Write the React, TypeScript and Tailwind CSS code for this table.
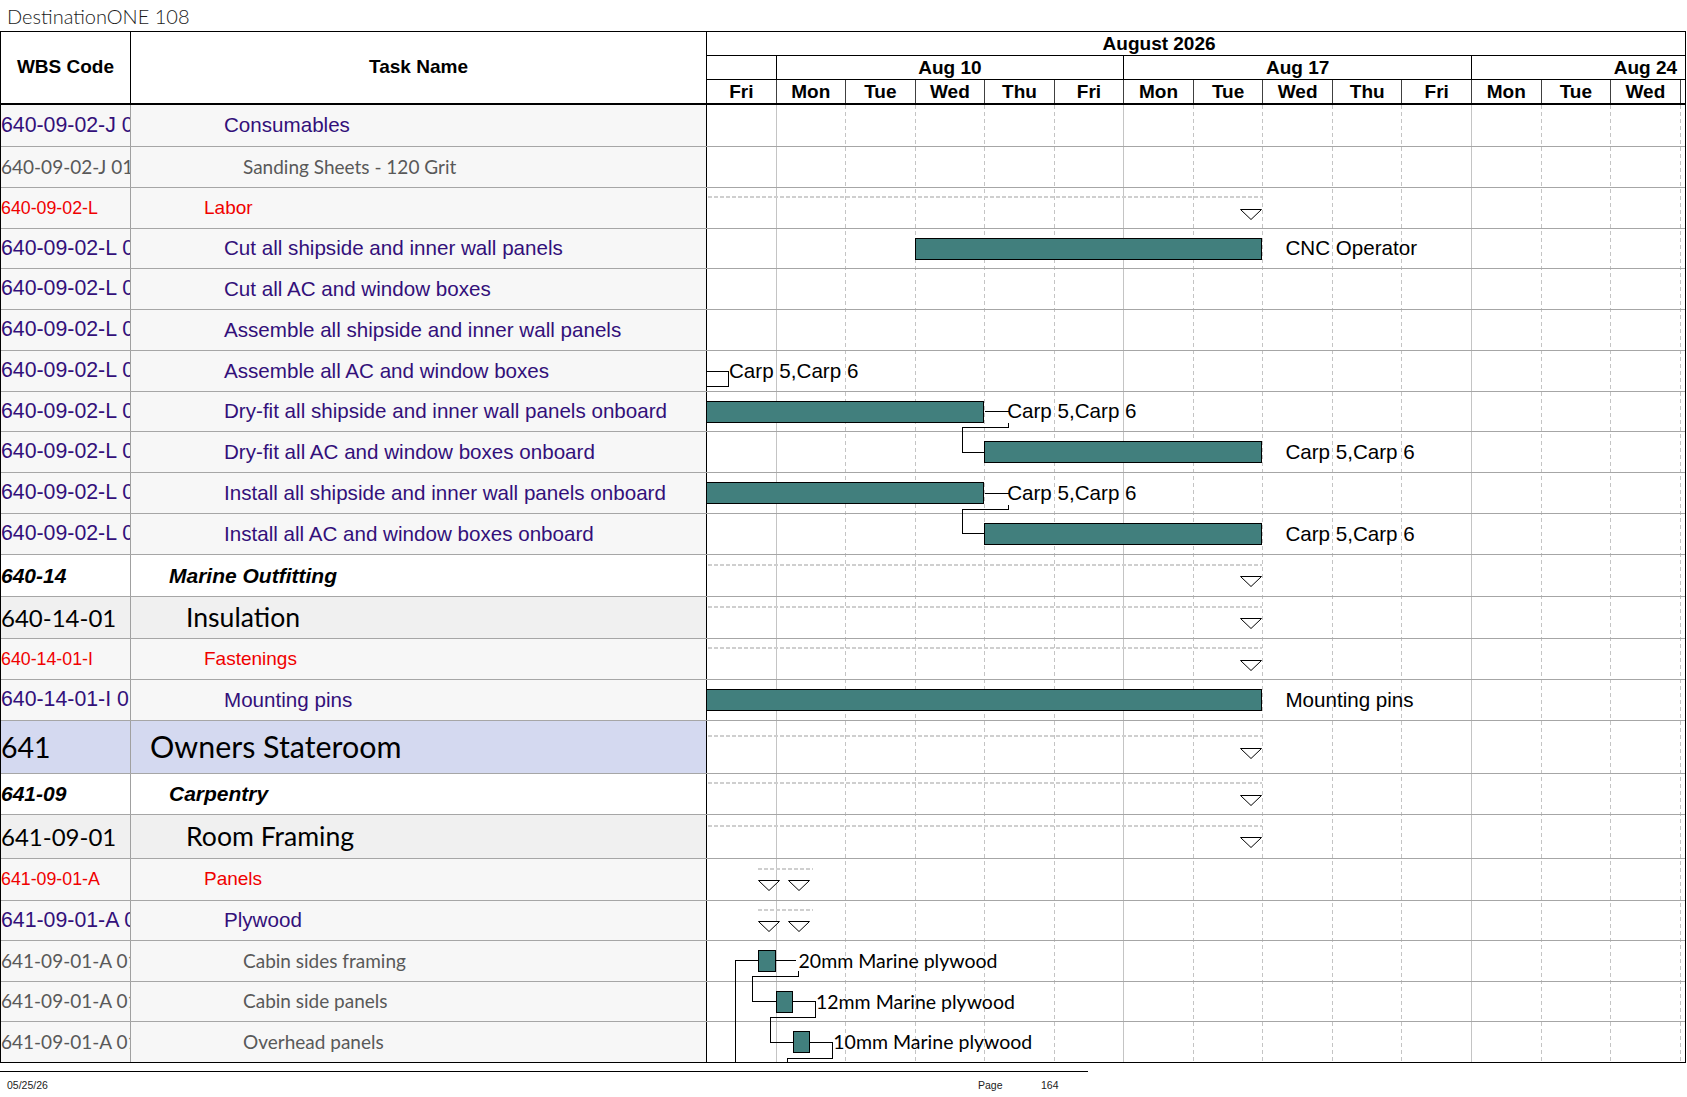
import React from "react";

const D = 69.55;

type Kind = "p" | "g" | "r" | "b" | "l3" | "l1";

type Row = {
  wbs: string;
  name: string;
  kind: Kind;
  h: number;
  bar?: [number, number];
  sum?: [number, number];
  twin?: boolean;
  label?: string;
  labelAt?: number;
  lato?: boolean;
};

const kindStyle: Record<Kind, { bg: string; text: string; wt: string; pl: string }> = {
  p: { bg: "bg-[#f7f7f7]", text: "text-[20.6px] text-[#33107a]", wt: "text-[21.3px] text-[#33107a]", pl: "pl-[93px]" },
  g: {
    bg: "bg-[#f7f7f7]",
    text: "font-['Lato',sans-serif] text-[19px] text-[#595959]",
    wt: "font-['Lato',sans-serif] text-[19px] text-[#595959]",
    pl: "pl-[112px]",
  },
  r: { bg: "bg-[#f7f7f7]", text: "text-[19px] text-[#f00000]", wt: "text-[17.8px] text-[#f00000]", pl: "pl-[73px]" },
  b: { bg: "bg-white", text: "text-[21px] font-bold italic text-black", wt: "text-[21px] font-bold italic text-black", pl: "pl-[38px]" },
  l3: {
    bg: "bg-[#f0f0f0]",
    text: "font-['Lato',sans-serif] text-[26.6px] text-black",
    wt: "font-['Lato',sans-serif] text-[24px] text-black",
    pl: "pl-[55px]",
  },
  l1: {
    bg: "bg-[#d4d9f0]",
    text: "font-['Lato',sans-serif] text-[30.4px] text-black",
    wt: "font-['Lato',sans-serif] text-[28.5px] text-black",
    pl: "pl-[19px]",
  },
};

const rows: Row[] = [
  { wbs: "640-09-02-J 01", name: "Consumables", kind: "p", h: 42 },
  { wbs: "640-09-02-J 0101", name: "Sanding Sheets - 120 Grit", kind: "g", h: 41 },
  { wbs: "640-09-02-L", name: "Labor", kind: "r", h: 41, sum: [-1, 8] },
  { wbs: "640-09-02-L 01", name: "Cut all shipside and inner wall panels", kind: "p", h: 40, bar: [3, 8], label: "CNC Operator" },
  { wbs: "640-09-02-L 02", name: "Cut all AC and window boxes", kind: "p", h: 41 },
  { wbs: "640-09-02-L 03", name: "Assemble all shipside and inner wall panels", kind: "p", h: 41 },
  { wbs: "640-09-02-L 04", name: "Assemble all AC and window boxes", kind: "p", h: 41, label: "Carp 5,Carp 6", labelAt: 0 },
  { wbs: "640-09-02-L 05", name: "Dry-fit all shipside and inner wall panels onboard", kind: "p", h: 40, bar: [-1, 4], label: "Carp 5,Carp 6" },
  { wbs: "640-09-02-L 06", name: "Dry-fit all AC and window boxes onboard", kind: "p", h: 41, bar: [4, 8], label: "Carp 5,Carp 6" },
  { wbs: "640-09-02-L 07", name: "Install all shipside and inner wall panels onboard", kind: "p", h: 41, bar: [-1, 4], label: "Carp 5,Carp 6" },
  { wbs: "640-09-02-L 08", name: "Install all AC and window boxes onboard", kind: "p", h: 41, bar: [4, 8], label: "Carp 5,Carp 6" },
  { wbs: "640-14", name: "Marine Outfitting", kind: "b", h: 42, sum: [-1, 8] },
  { wbs: "640-14-01", name: "Insulation", kind: "l3", h: 42, sum: [-1, 8] },
  { wbs: "640-14-01-I", name: "Fastenings", kind: "r", h: 41, sum: [-1, 8] },
  { wbs: "640-14-01-I 01", name: "Mounting pins", kind: "p", h: 41, bar: [-1, 8], label: "Mounting pins" },
  { wbs: "641", name: "Owners Stateroom", kind: "l1", h: 53, sum: [-1, 8] },
  { wbs: "641-09", name: "Carpentry", kind: "b", h: 41, sum: [-1, 8] },
  { wbs: "641-09-01", name: "Room Framing", kind: "l3", h: 44, sum: [-1, 8] },
  { wbs: "641-09-01-A", name: "Panels", kind: "r", h: 42, sum: [0.75, 1.5], twin: true },
  { wbs: "641-09-01-A 01", name: "Plywood", kind: "p", h: 40, sum: [0.75, 1.5], twin: true },
  { wbs: "641-09-01-A 0101", name: "Cabin sides framing", kind: "g", h: 41, bar: [0.75, 1.0], label: "20mm Marine plywood", lato: true },
  { wbs: "641-09-01-A 0102", name: "Cabin side panels", kind: "g", h: 40, bar: [1.0, 1.25], label: "12mm Marine plywood", lato: true },
  { wbs: "641-09-01-A 0103", name: "Overhead panels", kind: "g", h: 40, bar: [1.25, 1.5], label: "10mm Marine plywood", lato: true },
];

// the last column (Thu) only shows as a sliver at the right edge, so no label
const days = ["Fri", "Mon", "Tue", "Wed", "Thu", "Fri", "Mon", "Tue", "Wed", "Thu", "Fri", "Mon", "Tue", "Wed", ""];
// first week starts 4 days before the visible range; its label would be off-screen
const weeks = ["", "Aug 10", "Aug 17", "Aug 24"];

function Tri({ left, top }: { left: number; top: number }) {
  return (
    <svg className="absolute" style={{ left, top }} width="22" height="11" viewBox="0 0 22 11">
      <polygon points="0.5,0.5 21.5,0.5 11,10.5" fill="white" stroke="black" strokeWidth="1" />
    </svg>
  );
}

function GanttCell({ row }: { row: Row }) {
  const c = (row.h - 1) / 2;
  const end = row.bar ? row.bar[1] : row.labelAt ?? 0;
  return (
    <div className="relative flex-1 self-stretch overflow-hidden">
      {row.sum && (
        <>
          <div
            className="absolute h-[2px] bg-[repeating-linear-gradient(90deg,#cfcfcf_0_4px,transparent_4px_6px)]"
            style={{ left: row.sum[0] * D - 1, width: (row.sum[1] - row.sum[0]) * D + (row.twin ? 3 : 0), top: Math.round(c - 12) }}
          />
          {row.twin && <Tri left={row.sum[0] * D - 1} top={Math.round(c + 0.5)} />}
          <Tri left={row.sum[1] * D - 23} top={Math.round(c + 0.5)} />
        </>
      )}
      {row.bar && (
        <div
          className="absolute h-[22px] border border-black bg-[#417f7d]"
          style={{ left: row.bar[0] * D - 1, width: (row.bar[1] - row.bar[0]) * D, top: Math.round(c - 11) }}
        />
      )}
      {row.label && (
        <div
          className={
            "absolute inset-y-0 flex items-center whitespace-nowrap text-black " +
            (row.lato ? "font-['Lato',sans-serif] text-[19.5px]" : "text-[20.6px]")
          }
          style={{ left: end * D + 22 }}
        >
          {row.label}
        </div>
      )}
    </div>
  );
}

function Links() {
  const paths = [
    "M706 371.5 H728.5 V386.5 H706",
    "M984.5 411.5 H1008.5",
    "M1008.5 422.5 V427.5 H962.5 V452.5 H985",
    "M984.5 493.5 H1008.5",
    "M1008.5 504.5 V509.5 H962.5 V533.5 H985",
    "M735.5 1062 V960.5 H758.5",
    "M775 960.5 H796",
    "M798.5 971 V976.5 H752.5 V1001.5 H775.5",
    "M792.5 1001.5 H815.5 V1017.5 H770.5 V1042.5 H793.5",
    "M810 1042.5 H832.5 V1058.5 H787.5 V1062",
  ];
  return (
    <svg
      className="absolute left-[705px] top-0 z-20 pointer-events-none"
      width="979"
      height="957"
      viewBox="706 105 979 957"
    >
      {paths.map((d, i) => (
        <path key={i} d={d} fill="none" stroke="black" strokeWidth="1" shapeRendering="crispEdges" />
      ))}
    </svg>
  );
}

export default function App() {
  return (
    <div className="relative w-[1687px] h-[1097px] overflow-hidden bg-white font-['Liberation_Sans',Arial,sans-serif] text-black">
      {/* Title */}
      <div className="h-[31px] flex items-center pl-[7px] font-['Lato',sans-serif] font-light text-[20px] text-[#1a1a1a]">
        DestinationONE 108
      </div>

      {/* Table */}
      <div className="w-[1686px] border border-black">
        {/* Header */}
        <div className="flex h-[73px] border-b-2 border-black">
          <div className="w-[130px] shrink-0 border-r border-black flex items-center justify-center text-[19px] font-bold">
            WBS Code
          </div>
          <div className="w-[576px] shrink-0 border-r border-black flex items-center justify-center text-[19px] font-bold">
            Task Name
          </div>
          <div className="flex-1 flex flex-col overflow-hidden text-[19px] font-bold">
            <div className="h-[24px] shrink-0 border-b border-black flex">
              <div className="-ml-[278.2px] w-[1460.55px] shrink-0 text-center leading-[23px]">August 2026</div>
            </div>
            <div className="h-[24px] shrink-0 border-b border-black flex">
              <div className="-ml-[278.2px] flex">
                {weeks.map((w, i) => (
                  <div key={i} className="w-[347.75px] shrink-0 border-r border-black text-center leading-[23px]">
                    {w}
                  </div>
                ))}
              </div>
            </div>
            <div className="h-[23px] shrink-0 flex">
              {days.map((d, i) => (
                <div key={i} className="w-[69.55px] shrink-0 border-r border-[#404040] text-center leading-[23px]">
                  {d}
                </div>
              ))}
            </div>
          </div>
        </div>

        {/* Body */}
        <div className="relative">
          {/* day grid */}
          <div className="absolute left-[706px] top-0 bottom-0 right-0 z-0 flex overflow-hidden">
            {days.map((_, i) => (
              <div key={i} className="w-[69.55px] shrink-0 h-full flex justify-end">
                {i === 0 || i === 5 || i === 10 ? (
                  <div className="w-px h-full bg-[#c4c4c4]" />
                ) : (
                  <div className="w-px h-full bg-[repeating-linear-gradient(180deg,#c4c4c4_0_4px,transparent_4px_7px)]" />
                )}
              </div>
            ))}
          </div>

          {rows.map((row, i) => {
            const k = kindStyle[row.kind];
            const last = i === rows.length - 1;
            return (
              <div
                key={i}
                className={"relative z-10 flex " + (last ? "" : "border-b border-[#a6a6a6]")}
                style={{ height: row.h }}
              >
                <div className={"w-[130px] shrink-0 border-r border-[#a0a0a0] overflow-hidden whitespace-nowrap flex items-center " + k.bg + " " + k.wt}>
                  {row.wbs}
                </div>
                <div className={"w-[576px] shrink-0 border-r border-black overflow-hidden whitespace-nowrap flex items-center " + k.bg + " " + k.text + " " + k.pl}>
                  {row.name}
                </div>
                <GanttCell row={row} />
              </div>
            );
          })}

          <Links />
        </div>
      </div>

      {/* Footer */}
      <div className="mt-[8px] w-[1088px] border-t border-black" />
      <div className="flex pt-[6px] text-[10.5px] leading-[14px] text-[#222]">
        <div className="w-[978px] shrink-0 pl-[7px]">05/25/26</div>
        <div className="w-[63px] shrink-0">Page</div>
        <div>164</div>
      </div>
    </div>
  );
}
